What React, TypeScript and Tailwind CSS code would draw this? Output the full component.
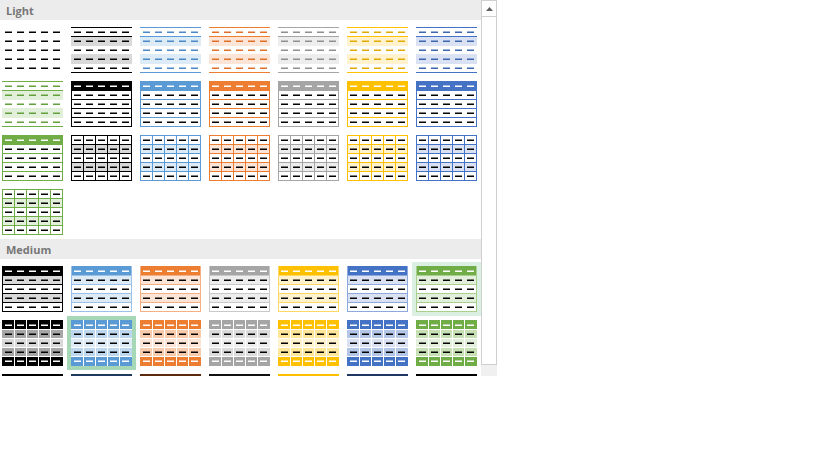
type Tone = { a: string; dark: string; t80: string; t60: string; ln: string };
type Kind = 'none' | 'bands' | 'header' | 'grid' | 'medBands' | 'medBlock' | 'medDark';

const tones: Record<string, Tone> = {
  black: { a: '#000000', dark: '#000000', t80: '#d9d9d9', t60: '#a6a6a6', ln: '#000000' },
  blue: { a: '#5b9bd5', dark: '#4a88c8', t80: '#ddebf7', t60: '#bdd7ee', ln: '#9bc2e6' },
  orange: { a: '#ed7d31', dark: '#e07028', t80: '#fce4d6', t60: '#f8cbad', ln: '#f4b084' },
  gray: { a: '#a5a5a5', dark: '#909090', t80: '#ededed', t60: '#dbdbdb', ln: '#c9c9c9' },
  gold: { a: '#ffc000', dark: '#e0aa00', t80: '#fff2cc', t60: '#ffe699', ln: '#ffd966' },
  navy: { a: '#4472c4', dark: '#3d66b0', t80: '#d9e1f2', t60: '#b4c6e7', ln: '#8ea9db' },
  green: { a: '#70ad47', dark: '#63a03c', t80: '#e2efda', t60: '#c6e0b4', ln: '#a9d08e' },
};

const ROWS = [0, 9, 18, 27, 36, 45];
const COLS = [0, 12, 24, 36, 48, 60];

function Thumb({ kind, tone }: { kind: Kind; tone: Tone }) {
  const fills: [number, string][] = [];
  const hLines: [number, string, number?][] = [];
  const vLines: [number, string][] = [];
  let dash = ['#000', '#000', '#000', '#000', '#000'];

  if (kind === 'bands') {
    fills.push([1, tone.t80], [3, tone.t80]);
    hLines.push([0, tone.a], [9, tone.a], [45, tone.a]);
    dash = dash.map(() => tone.dark);
  }
  if (kind === 'header') {
    fills.push([0, tone.a]);
    ROWS.forEach((y) => hLines.push([y, tone.a]));
    vLines.push([0, tone.a], [60, tone.a]);
    dash[0] = '#fff';
  }
  if (kind === 'grid') {
    fills.push([1, tone.t80], [3, tone.t80]);
    ROWS.forEach((y) => hLines.push([y, tone.a]));
    COLS.forEach((x) => vLines.push([x, tone.a]));
  }
  if (kind === 'medBands') {
    fills.push([0, tone.a], [1, tone.t80], [3, tone.t80]);
    ROWS.forEach((y) => hLines.push([y, y === 0 ? tone.a : tone.ln]));
    vLines.push([0, tone.ln], [60, tone.ln]);
    dash[0] = '#fff';
  }
  if (kind === 'medBlock') {
    fills.push([0, tone.a], [1, tone.t60], [2, tone.t80], [3, tone.t60], [4, tone.a]);
    [9, 18, 27, 36].forEach((y) => hLines.push([y, '#fff']));
    [12, 24, 36, 48].forEach((x) => vLines.push([x, '#fff']));
    dash[0] = '#fff';
    dash[4] = '#fff';
  }
  if (kind === 'medDark') {
    hLines.push([0, tone.dark, 2]);
  }

  return (
    <svg width="61" height="46" viewBox="0 0 61 46" className="block">
      <g shapeRendering="crispEdges">
        <rect x="0" y="0" width="61" height="46" fill="#fff" />
        {fills.map(([r, c]) => (
          <rect key={'f' + r} x="0" y={ROWS[r]} width="61" height={ROWS[r + 1] - ROWS[r] + 1} fill={c} />
        ))}
        {hLines.map(([y, c, h], i) => (
          <rect key={'h' + i} x="0" y={y} width="61" height={h ?? 1} fill={c} />
        ))}
        {vLines.map(([x, c], i) => (
          <rect key={'v' + i} x={x} y="0" width="1" height="46" fill={c} />
        ))}
      </g>
      {kind !== 'medDark' &&
        ROWS.slice(0, 5).map((y, r) =>
          COLS.slice(0, 5).map((x, c) => (
            <rect key={`d${r}-${c}`} x={x + 3} y={y + 4.5} width="7" height="1.5" fill={dash[r]} />
          ))
        )}
    </svg>
  );
}

type Cell = { kind: Kind; tone: string; state?: 'hover' | 'selected' };

const order = ['black', 'blue', 'orange', 'gray', 'gold', 'navy', 'green'];

// None, Light 1-21: the green variants wrap onto the start of the next row
const lightCells: Cell[] = [
  { kind: 'none', tone: 'black' },
  ...order.map((t) => ({ kind: 'bands' as Kind, tone: t })),
  ...order.map((t) => ({ kind: 'header' as Kind, tone: t })),
  ...order.map((t) => ({ kind: 'grid' as Kind, tone: t })),
];

const darkTones: Record<string, string> = {
  black: '#000', blue: '#1f3a5c', orange: '#5c2a0c', gray: '#111', gold: '#ffc000', navy: '#203764', green: '#000',
};

const medium: Cell[] = [
  ...order.map((t) => ({ kind: 'medBands' as Kind, tone: t, state: t === 'green' ? ('hover' as const) : undefined })),
  ...order.map((t) => ({ kind: 'medBlock' as Kind, tone: t, state: t === 'blue' ? ('selected' as const) : undefined })),
  ...order.map((t) => ({ kind: 'medDark' as Kind, tone: t })),
];

function Gallery({ cells, dark }: { cells: Cell[]; dark?: boolean }) {
  return (
    <div className="ml-[-2px] grid grid-cols-[repeat(7,69px)] pt-[3px]">
      {cells.map((c, i) => {
        const tone = dark ? { ...tones[c.tone], dark: darkTones[c.tone] } : tones[c.tone];
        const bg = c.state === 'hover' ? 'bg-[#dcefe3]' : c.state === 'selected' ? 'bg-[#a6d8b8]' : '';
        return (
          <div key={i} className={`h-[54px] w-[69px] pl-[4px] pt-[4px] ${bg}`}>
            <Thumb kind={c.kind} tone={tone} />
          </div>
        );
      })}
    </div>
  );
}

function SectionHeader({ label }: { label: string }) {
  return (
    <div className="h-[20px] bg-[#ececec] pl-[6px] text-[11px] font-bold leading-[21px] text-[#777777]" style={{ fontFamily: '"Open Sans", "Noto Sans", sans-serif' }}>
      {label}
    </div>
  );
}

export default function App() {
  return (
    <div className="h-[460px] w-[819px] bg-white">
      <div className="flex h-[376px] w-[497px]">
        <div className="h-full w-[481px] overflow-hidden">
          <SectionHeader label="Light" />
          <Gallery cells={lightCells} />
          <SectionHeader label="Medium" />
          <Gallery cells={medium} dark />
        </div>
        <div className="flex w-[16px] flex-col">
          <div className="flex h-[17px] items-center justify-center border border-[#cfcfcf] bg-white">
            <svg width="7" height="4" viewBox="0 0 7 4">
              <path d="M0 4 L3.5 0 L7 4 Z" fill="#606060" />
            </svg>
          </div>
          <div className="flex-1 border-x border-b border-[#cfcfcf] bg-white" />
          <div className="h-[11px] bg-[#f0f0f0]" />
        </div>
      </div>
    </div>
  );
}
